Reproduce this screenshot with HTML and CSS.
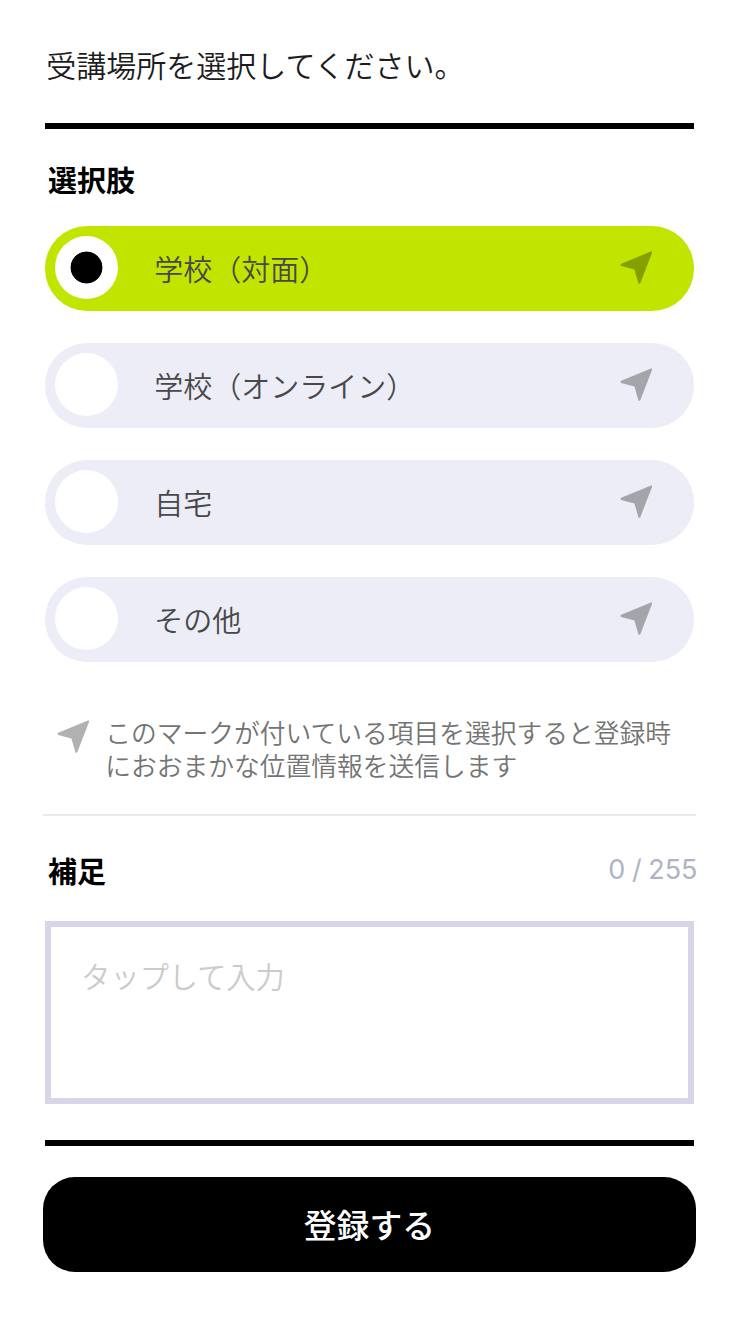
FILE: index.html
```
<!DOCTYPE html>
<html lang="ja">
  <head>
    <meta charset="UTF-8" />
    <meta name="viewport" content="width=device-width, initial-scale=1.0" />
    <title>受講場所の選択</title>
    <link rel="stylesheet" href="styles.css">
  </head>
  <body>
    <!-- 位置情報マーク -->
    <svg class="defs" width="0" height="0">
      <symbol id="mark" viewBox="0 0 32 33">
        <path d="M31 .5Q32.6 0 32 1.9L20.4 31.9Q19.3 33.6 18.3 31.9L14.4 18.4L1.2 15Q-.3 14 1.2 12.8Z" fill="currentColor" />
      </symbol>
    </svg>
    <form class="form">
      <h1 class="title">受講場所を選択してください。</h1>
      <hr class="line">
      <h2 class="heading">選択肢</h2>
      <div class="options">
        <label class="option">
          <input type="radio" class="radio" name="place" checked>
          <span class="name">学校（対面）</span>
          <svg class="mark"><use href="#mark" /></svg>
        </label>
        <label class="option">
          <input type="radio" class="radio" name="place">
          <span class="name">学校（オンライン）</span>
          <svg class="mark"><use href="#mark" /></svg>
        </label>
        <label class="option">
          <input type="radio" class="radio" name="place">
          <span class="name">自宅</span>
          <svg class="mark"><use href="#mark" /></svg>
        </label>
        <label class="option">
          <input type="radio" class="radio" name="place">
          <span class="name">その他</span>
          <svg class="mark"><use href="#mark" /></svg>
        </label>
      </div>
      <div class="note">
        <svg class="mark"><use href="#mark" /></svg>
        <p>このマークが付いている項目を選択すると登録時におおまかな位置情報を送信します</p>
      </div>
      <div class="memo-head">
        <h2 class="heading">補足</h2>
        <span class="count">0 / 255</span>
      </div>
      <textarea class="memo" maxlength="255" placeholder="タップして入力"></textarea>
      <hr class="line">
      <button type="button" class="submit">登録する</button>
    </form>
  </body>
</html>
```
FILE: styles.css
```
* {
  box-sizing: border-box;
}
body {
  margin: 0;
  background-color: #fff;
  font-family: "Noto Sans CJK JP", sans-serif;
}
.defs {
  display: none;
}
.form {
  display: flex;
  flex-direction: column;
  padding: 42px 44.5px 0 45.3px;
}
.title {
  margin: 0 0 37px 1px;
  font-size: 30px;
  font-weight: 350;
  line-height: 44px;
  color: #1c1c1e;
}
.line {
  width: 100%;
  height: 6px;
  margin: 0;
  border: none;
  background-color: #000;
}
.heading {
  margin: 0;
  font-size: 29px;
  font-weight: 700;
  line-height: 44px;
  color: #000;
}
.form > .heading {
  margin: 28px 0 25px 2.7px;
}

/* 選択肢 */
.options {
  display: flex;
  flex-direction: column;
  gap: 32px;
}
.option {
  display: flex;
  align-items: flex-start;
  height: 85px;
  padding: 10px 41.4px 0 10px;
  border-radius: 42px;
  background-color: #ededf7;
  color: #484848;
}
.option:has(:checked) {
  background-color: #c2e500;
}
.radio {
  appearance: none;
  flex: none;
  width: 63px;
  height: 63px;
  margin: 0;
  border-radius: 50%;
  background-color: #fff;
}
.radio:checked {
  background-image: radial-gradient(circle, #000 15.5px, #fff 16.3px);
}
.name {
  flex: 1;
  margin-left: 36px;
  font-size: 29px;
  font-weight: 350;
  line-height: 64px;
}
.mark {
  flex: none;
  width: 32px;
  height: 33px;
  overflow: visible;
  color: #000;
  opacity: 0.3;
}
.option .mark {
  margin-top: 15px;
}

/* 注意書き */
.note {
  display: flex;
  gap: 16px;
  margin: 53px -2px 0;
  padding: 0 0 33px 14px;
  border-bottom: 2px solid #e9e9e9;
}
.note .mark {
  margin-top: 5px;
}
.note p {
  margin: 0;
  font-size: 25.75px;
  font-weight: 350;
  line-height: 33px;
  color: #747474;
}

/* 補足 */
.memo-head {
  display: flex;
  justify-content: space-between;
  margin: 32px -4px 29px 2.7px;
}
.count {
  padding-top: 2px;
  font-family: Inter, sans-serif;
  font-size: 27px;
  line-height: 40px;
  word-spacing: -1px;
  color: #b0b3c6;
}
.memo {
  height: 183px;
  margin-bottom: 36px;
  padding: 26px 30px;
  border: 6px solid #d7d6e8;
  border-radius: 0;
  outline: none;
  resize: none;
  font-family: inherit;
  font-size: 29.2px;
  font-weight: 350;
  line-height: 44px;
}
.memo::placeholder {
  color: #cbcbcb;
}
.submit {
  height: 95px;
  margin: 31px -2px 0;
  padding: 0 0 3px;
  border: none;
  border-radius: 32px;
  background-color: #000;
  color: #fff;
  font-family: inherit;
  font-size: 32.8px;
  font-weight: 500;
}
```
